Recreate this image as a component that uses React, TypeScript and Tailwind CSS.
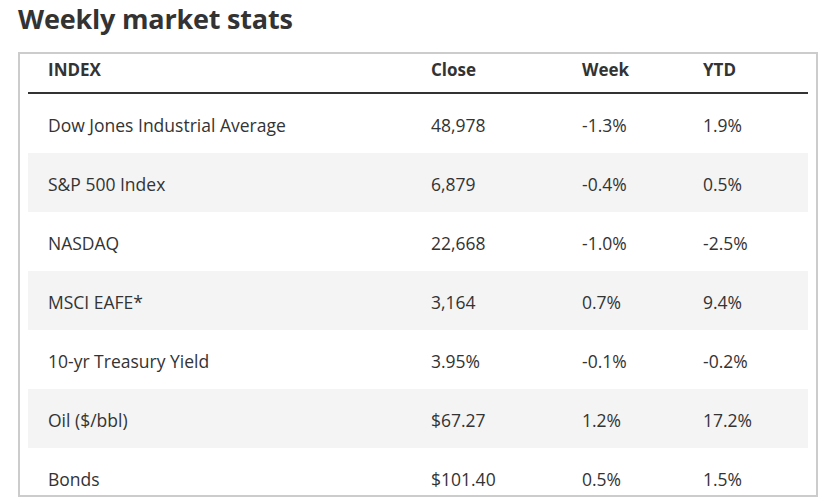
const rows = [
  ['Dow Jones Industrial Average', '48,978', '-1.3%', '1.9%'],
  ['S&P 500 Index', '6,879', '-0.4%', '0.5%'],
  ['NASDAQ', '22,668', '-1.0%', '-2.5%'],
  ['MSCI EAFE*', '3,164', '0.7%', '9.4%'],
  ['10-yr Treasury Yield', '3.95%', '-0.1%', '-0.2%'],
  ['Oil ($/bbl)', '$67.27', '1.2%', '17.2%'],
  ['Bonds', '$101.40', '0.5%', '1.5%'],
]

const cols = 'grid grid-cols-[383px_151px_121px_1fr]'

export default function App() {
  return (
    <div className="w-[831px] h-[503px] bg-white overflow-hidden text-[#333] font-['Open_Sans',sans-serif]">
      <div className="pl-[18px] pt-[2px]">
        <h2 className="text-[27px] leading-[34px] font-bold tracking-[-0.2px] text-[#333]">Weekly market stats</h2>
        <div className="mt-[16px] w-[800px] h-[445px] border-2 border-[#ccc] px-[8px] overflow-hidden">
          <div className={`${cols} h-[40px] items-center pb-[7px] border-b-2 border-[#333] text-[17px] font-bold`}>
            <div className="pl-5">INDEX</div>
            <div className="pl-5">Close</div>
            <div className="pl-5">Week</div>
            <div className="pl-5">YTD</div>
          </div>
          {rows.map((r, i) => (
            <div
              key={r[0]}
              className={`${cols} h-[59px] items-center pt-[4px] text-[17.5px] ${i % 2 === 1 ? 'bg-[#f4f4f4]' : ''}`}
            >
              {r.map((c, j) => (
                <div key={j} className="pl-5">{c}</div>
              ))}
            </div>
          ))}
        </div>
      </div>
    </div>
  )
}
